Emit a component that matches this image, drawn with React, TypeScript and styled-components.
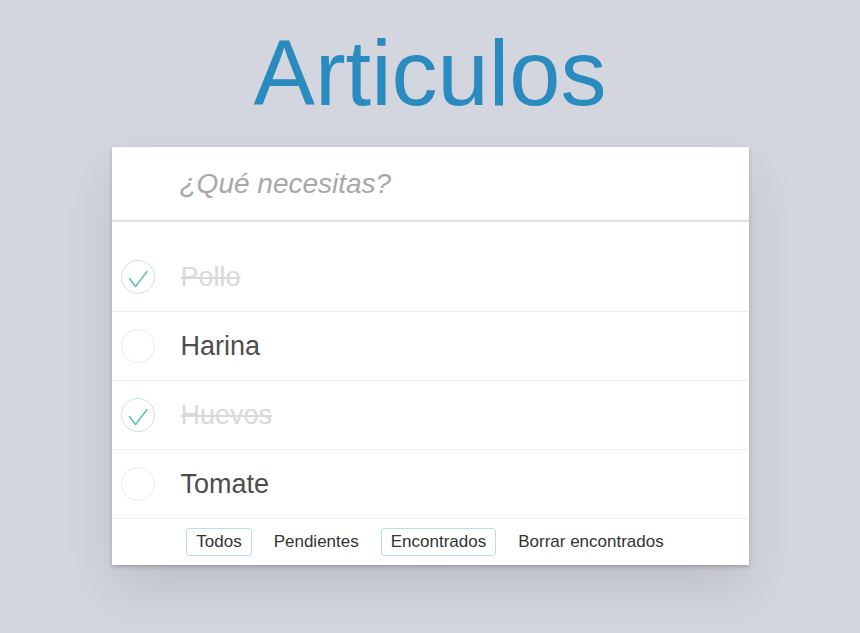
import styled, { createGlobalStyle } from "styled-components"

type Item = {
  id: number
  title: string
  done: boolean
}

const items: Item[] = [
  { id: 1, title: "Pollo", done: true },
  { id: 2, title: "Harina", done: false },
  { id: 3, title: "Huevos", done: true },
  { id: 4, title: "Tomate", done: false },
]

const filters = [
  { label: "Todos", outlined: true },
  { label: "Pendientes", outlined: false },
  { label: "Encontrados", outlined: true },
  { label: "Borrar encontrados", outlined: false },
]

const GlobalStyle = createGlobalStyle`
  html, body {
    margin: 0;
    padding: 0;
    background: #d3d6de;
    font-family: "Liberation Sans", Arial, sans-serif;
    color: #4d4d4d;
  }
`

const Page = styled.div`
  min-height: 633px;
  padding-top: 27px;
  box-sizing: border-box;
`

const Title = styled.h1`
  margin: 0 0 28px;
  height: 92px;
  font-size: 92px;
  line-height: 92px;
  font-weight: 400;
  text-align: center;
  color: #2a8bbf;
`

const Card = styled.section`
  width: 637px;
  margin: 0 auto;
  background: #fff;
  box-shadow: 0 2px 4px 0 rgba(0, 0, 0, 0.2), 0 25px 50px 0 rgba(0, 0, 0, 0.1);
`

const NewItem = styled.input`
  display: block;
  width: 100%;
  height: 73px;
  box-sizing: border-box;
  padding: 0 16px 0 68px;
  border: none;
  outline: none;
  background: #fff;
  font-family: "Liberation Sans", Arial, sans-serif;
  font-size: 28px;
  color: #4d4d4d;
  box-shadow: inset 0 -2px 1px rgba(0, 0, 0, 0.03);

  &::placeholder {
    font-style: italic;
    color: #a8a8a8;
  }
`

const Main = styled.div`
  border-top: 2px solid #e2e2e2;
  padding-top: 21px;
`

const List = styled.ul`
  margin: 0;
  padding: 0;
  list-style: none;
`

const Row = styled.li`
  display: flex;
  align-items: center;
  height: 68px;
  padding-left: 8px;
  border-bottom: 1px solid #ededed;
`

const Toggle = styled.svg`
  flex: none;
  width: 36px;
  height: 36px;
`

const Label = styled.span<{ $done: boolean }>`
  margin-left: 25px;
  font-size: 27px;
  color: ${(p) => (p.$done ? "#d9d9d9" : "#4d4d4d")};
  text-decoration: ${(p) => (p.$done ? "line-through" : "none")};
`

const Footer = styled.footer`
  display: flex;
  justify-content: center;
  align-items: center;
  gap: 12px;
  height: 46px;
`

const FilterButton = styled.button<{ $outlined: boolean }>`
  padding: 3px 9px;
  border: 1px solid ${(p) => (p.$outlined ? "#b7dfee" : "transparent")};
  border-radius: 3px;
  background: none;
  font-family: "Liberation Sans", Arial, sans-serif;
  font-size: 17px;
  line-height: 20px;
  color: #333;
  cursor: pointer;
`

function CheckCircle({ done }: { done: boolean }) {
  return (
    <Toggle viewBox="0 0 36 36">
      <circle cx="18" cy="18" r="16.5" fill="none" stroke={done ? "#c8e4df" : "#ededed"} strokeWidth="1" />
      {done && (
        <path d="M9.5 19.5 L15.5 27.5 L27 12.5" fill="none" stroke="#5dc2af" strokeWidth="1.5" strokeLinecap="round" strokeLinejoin="round" />
      )}
    </Toggle>
  )
}

export default function App() {
  return (
    <>
      <GlobalStyle />
      <Page>
        <Title>Articulos</Title>
        <Card>
          <NewItem placeholder="¿Qué necesitas?" />
          <Main>
            <List>
              {items.map((item) => (
                <Row key={item.id}>
                  <CheckCircle done={item.done} />
                  <Label $done={item.done}>{item.title}</Label>
                </Row>
              ))}
            </List>
          </Main>
          <Footer>
            {filters.map((f) => (
              <FilterButton key={f.label} $outlined={f.outlined}>
                {f.label}
              </FilterButton>
            ))}
          </Footer>
        </Card>
      </Page>
    </>
  )
}
